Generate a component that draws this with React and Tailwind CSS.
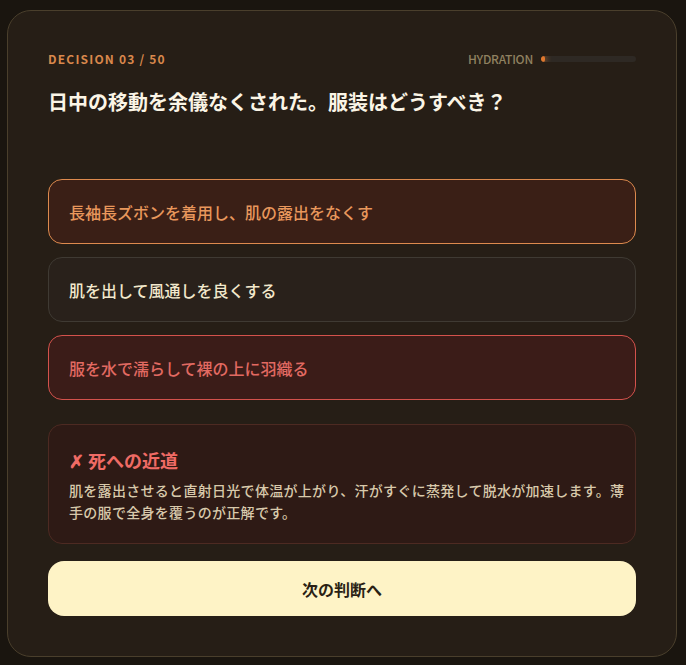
import React from "react";

export default function App() {
  const font = { fontFamily: '"Noto Sans CJK JP", "Noto Sans", sans-serif' };
  return (
    <div className="w-[686px] h-[665px] bg-[#1a150f] pl-[7px] pr-[9px] pt-[10px] pb-[8px]" style={font}>
      <div className="h-full rounded-[24px] border border-[#4a3f2c] bg-[#261e16] px-[40px] pt-[40px] pb-[40px] flex flex-col">
        <div className="flex items-center justify-between h-[16px]">
          <div className="text-[12px] font-bold tracking-[0.1em] text-[#d9884c]">DECISION 03 / 50</div>
          <div className="flex items-center gap-[8px]">
            <span className="text-[12px] font-medium text-[#8f8160] tracking-[-0.02em]">HYDRATION</span>
            <div className="w-[95px] h-[6px] rounded-full bg-[#2e2924] overflow-hidden">
              <div className="h-full w-[4px] rounded-full bg-[#e0782e] shadow-[0_0_6px_#f08a3a]" />
            </div>
          </div>
        </div>
        <h1 className="mt-[21px] text-[20px] font-bold text-[#fbf5e6] leading-[28px]">
          日中の移動を余儀なくされた。服装はどうすべき？
        </h1>
        <div className="mt-[63px] flex flex-col gap-[13px]">
          <div className="h-[65px] rounded-[14px] border border-[#dd8a4e] bg-[#3a1f16] px-[20px] flex items-center text-[16px] font-medium text-[#e8975c]">
            長袖長ズボンを着用し、肌の露出をなくす
          </div>
          <div className="h-[65px] rounded-[14px] border border-[#3f3a33] bg-[#29211b] px-[20px] flex items-center text-[16px] font-medium text-[#f2e8cc]">
            肌を出して風通しを良くする
          </div>
          <div className="h-[65px] rounded-[14px] border border-[#d4524c] bg-[#3b1c18] px-[20px] flex items-center text-[16px] font-medium text-[#e26a62]">
            服を水で濡らして裸の上に羽織る
          </div>
        </div>
        <div className="mt-[24px] rounded-[14px] border border-[#4d2a22] bg-[#2e1a15] pl-[20px] pr-[10px] pt-[22px] pb-[20px]">
          <div className="text-[18px] font-bold text-[#ef6b65] leading-[26px]">✗ 死への近道</div>
          <p className="mt-[6px] text-[14px] font-medium tracking-[0.3px] leading-[22px] text-[#d8c9ab]">
            肌を露出させると直射日光で体温が上がり、汗がすぐに蒸発して脱水が加速します。薄手の服で全身を覆うのが正解です。
          </p>
        </div>
        <button className="mt-[17px] h-[55px] shrink-0 rounded-[16px] bg-[#fef3c6] text-[16px] font-bold text-[#2a1f14] flex items-center justify-center">
          次の判断へ
        </button>
      </div>
    </div>
  );
}
